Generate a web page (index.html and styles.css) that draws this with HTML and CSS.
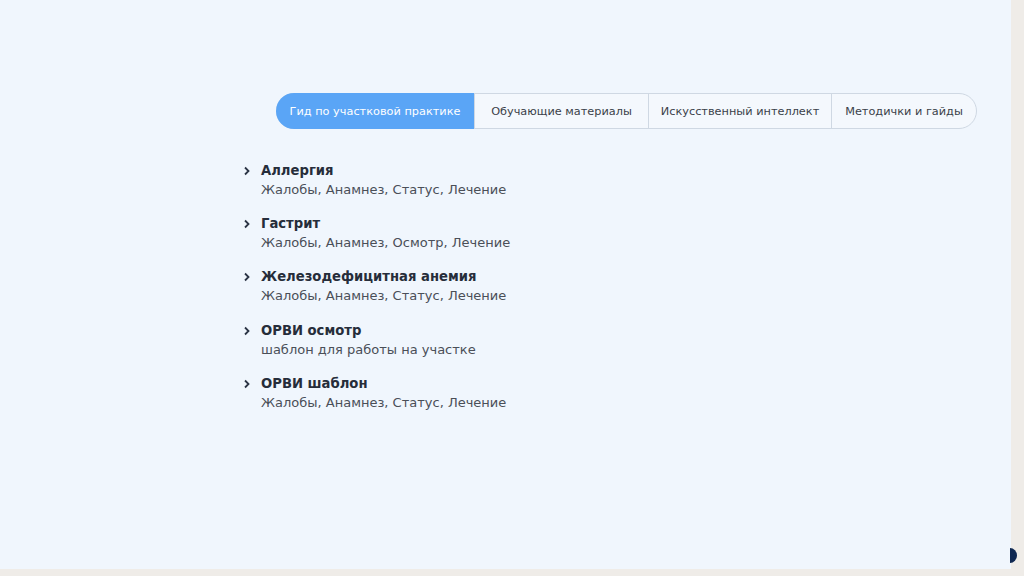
FILE: index.html
```html
<!DOCTYPE html>
<html lang="ru">
<head>
<meta charset="utf-8">
<link rel="stylesheet" href="styles.css">
</head>
<body>
<div class="page">
  <div class="content">
    <nav class="tabs">
      <div class="tab active">Гид по участковой практике</div>
      <div class="tab">Обучающие материалы</div>
      <div class="tab">Искусственный интеллект</div>
      <div class="tab">Методички и гайды</div>
    </nav>
    <ul class="list">
      <li class="item">
        <span class="chev"><svg width="8" height="10" viewBox="0 0 8 10"><path d="M2 1.5 L5.5 5 L2 8.5" fill="none" stroke="#2b3445" stroke-width="1.8"/></svg></span>
        <div class="text"><div class="title">Аллергия</div><div class="sub">Жалобы, Анамнез, Статус, Лечение</div></div>
      </li>
      <li class="item">
        <span class="chev"><svg width="8" height="10" viewBox="0 0 8 10"><path d="M2 1.5 L5.5 5 L2 8.5" fill="none" stroke="#2b3445" stroke-width="1.8"/></svg></span>
        <div class="text"><div class="title">Гастрит</div><div class="sub">Жалобы, Анамнез, Осмотр, Лечение</div></div>
      </li>
      <li class="item">
        <span class="chev"><svg width="8" height="10" viewBox="0 0 8 10"><path d="M2 1.5 L5.5 5 L2 8.5" fill="none" stroke="#2b3445" stroke-width="1.8"/></svg></span>
        <div class="text"><div class="title">Железодефицитная анемия</div><div class="sub">Жалобы, Анамнез, Статус, Лечение</div></div>
      </li>
      <li class="item">
        <span class="chev"><svg width="8" height="10" viewBox="0 0 8 10"><path d="M2 1.5 L5.5 5 L2 8.5" fill="none" stroke="#2b3445" stroke-width="1.8"/></svg></span>
        <div class="text"><div class="title">ОРВИ осмотр</div><div class="sub">шаблон для работы на участке</div></div>
      </li>
      <li class="item">
        <span class="chev"><svg width="8" height="10" viewBox="0 0 8 10"><path d="M2 1.5 L5.5 5 L2 8.5" fill="none" stroke="#2b3445" stroke-width="1.8"/></svg></span>
        <div class="text"><div class="title">ОРВИ шаблон</div><div class="sub">Жалобы, Анамнез, Статус, Лечение</div></div>
      </li>
    </ul>
  </div>
  <div class="fab"></div>
</div>
</body>
</html>
```
FILE: styles.css
```css
html, body {
  margin: 0;
  padding: 0;
  background: #efece8;
  width: 1024px;
  height: 576px;
  overflow: hidden;
  font-family: "DejaVu Sans", "Noto Sans", sans-serif;
}
.page {
  position: relative;
  width: 1011px;
  height: 569px;
  background: #f0f6fd;
}
.content {
  display: flex;
  flex-direction: column;
  padding: 93px 0 0 243px;
}
.tabs {
  display: flex;
  align-self: flex-start;
  margin-left: 33px;
  height: 36px;
  border: 1px solid #cfd8e3;
  border-radius: 18px;
  box-sizing: border-box;
  background: #f4f8fd;
}
.tab {
  display: flex;
  align-items: center;
  justify-content: center;
  box-sizing: border-box;
  font-size: 11.3px;
  color: #3a3f49;
  border-left: 1px solid #cfd8e3;
  white-space: nowrap;
}
.tab:nth-child(1) { width: 198px; }
.tab:nth-child(2) { width: 174px; }
.tab:nth-child(3) { width: 183px; }
.tab:nth-child(4) { width: 145px; }
.tab:first-child { border-left: none; }
.tab.active {
  background: #5aa5f6;
  color: #ffffff;
  border-radius: 18px 0 0 18px;
  margin: -1px 0 -1px -1px;
}
.list {
  list-style: none;
  margin: 32px 0 0 0;
  padding: 0;
  display: flex;
  flex-direction: column;
  gap: 15.2px;
}
.item {
  display: flex;
  gap: 10px;
}
.chev {
  display: flex;
  padding-top: 5px;
}
.title {
  font-size: 13.2px;
  font-weight: bold;
  color: #262d3a;
  line-height: 20px;
}
.sub {
  font-size: 13px;
  color: #4a4f58;
  line-height: 19px;
  margin-top: -1px;
}
.fab {
  position: absolute;
  left: 1003px;
  top: 548px;
  width: 14px;
  height: 15px;
  border-radius: 50%;
  background: #0f2852;
  clip-path: inset(0 0 0 7px);
}
```
